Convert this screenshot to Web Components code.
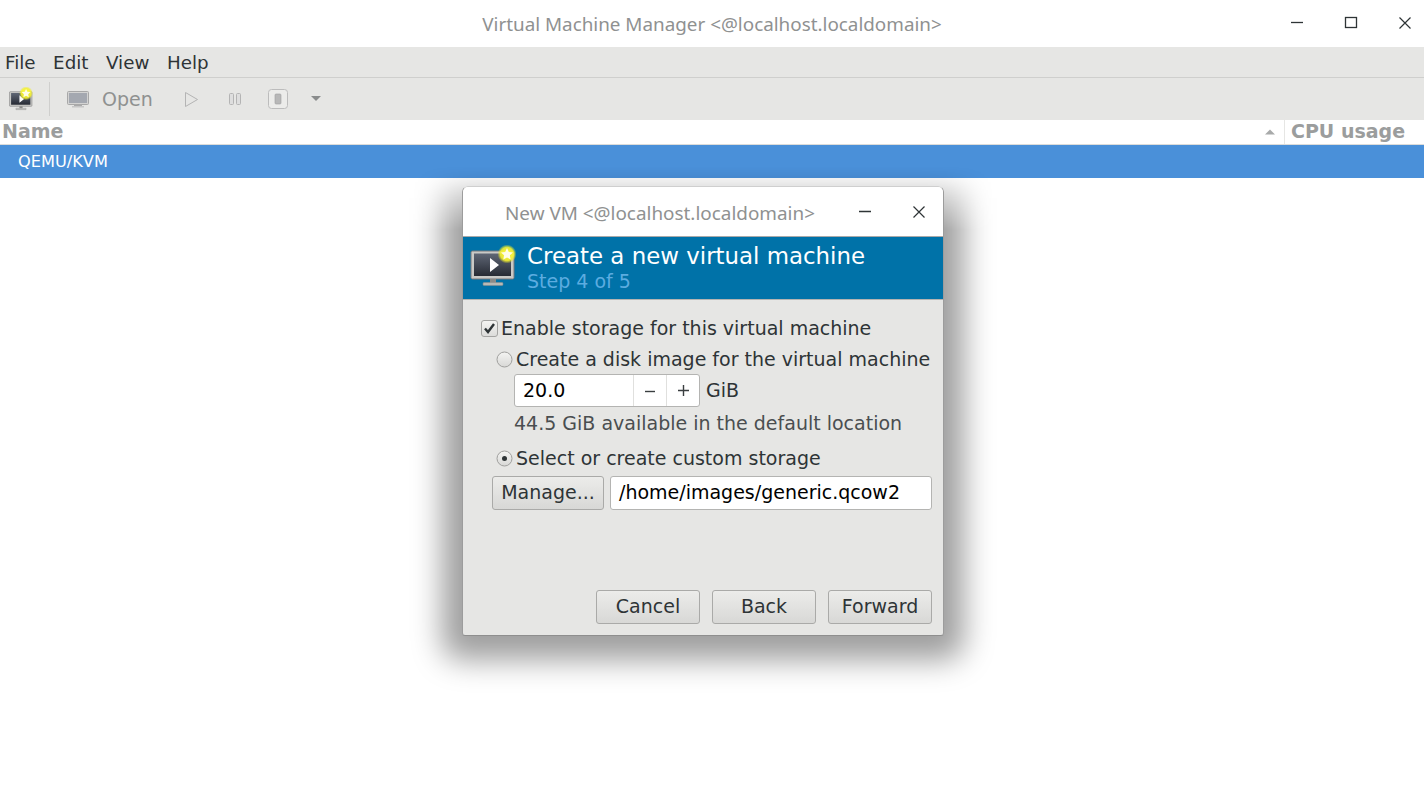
<!DOCTYPE html>
<html><head><meta charset="utf-8"><style>
html,body{margin:0;padding:0;width:1424px;height:802px;overflow:hidden;background:#fff;font-family:"DejaVu Sans",sans-serif}
</style></head><body>
<vm-manager></vm-manager>
<script>
function def(name,css,html){customElements.define(name,class extends HTMLElement{constructor(){super();this.attachShadow({mode:'open'}).innerHTML='<style>'+css+'</style>'+html;}});}
const monitor=(cx,cy,s,w,h)=>`<svg width="${w}" height="${h}" viewBox="0 0 46 44"><defs><linearGradient id="sc" x1="0" y1="0" x2="0" y2="1"><stop offset="0" stop-color="#5f6675"/><stop offset="1" stop-color="#272b34"/></linearGradient><radialGradient id="gl"><stop offset="0" stop-color="#ffff40"/><stop offset=".7" stop-color="#f6f230" stop-opacity=".9"/><stop offset="1" stop-color="#e8e820" stop-opacity="0"/></radialGradient></defs><rect x="1" y="8" width="43" height="28" rx="1.500" fill="#c9c9c6" stroke="#77777a"/><rect x="4" y="10.500" width="37" height="22.500" fill="url(#sc)"/><path d="M20 15v14l9-7z" fill="#fff"/><rect x="20" y="36" width="6" height="4" fill="#8a8a88"/><rect x="13" y="39.500" width="20" height="3" rx="1" fill="#b8b8b5" stroke="#8a8a88" stroke-width=".5"/><g transform="translate(${cx} ${cy}) scale(${s})"><circle r="9.500" fill="url(#gl)"/><path d="M0-6l1.800 3.900 4.200.5-3.100 2.900.8 4.200-3.700-2.100-3.700 2.100.8-4.200-3.100-2.900 4.200-.5z" fill="#fffde8"/></g></svg>`;
def('title-bar',`:host{display:flex;align-items:center;justify-content:center;height:47px;background:#fff;position:relative;font:18.850px "Noto Sans",sans-serif;color:#8f9191}
.c{position:absolute;right:12px;top:0;height:45px;display:flex;gap:40px;align-items:center}svg{display:block}`,`<span>Virtual Machine Manager &lt;@localhost.localdomain&gt;</span>
<div class="c"><svg width="14" height="14"><path d="M1 6.500h12" stroke="#2e3436" stroke-width="1.300"/></svg><svg width="14" height="14"><rect x="1.500" y="1.500" width="11" height="10" fill="none" stroke="#2e3436" stroke-width="1.300"/></svg><svg width="14" height="14"><path d="M1.500 1.500l11 11M12.500 1.500l-11 11" stroke="#2e3436" stroke-width="1.200"/></svg></div>`);
def('menu-bar',`:host{display:flex;height:30px;background:#e6e6e4;border-bottom:1px solid #cfcfcd;align-items:center;padding-left:5px;gap:17.500px;font-size:18.300px;color:#2e3436}`,`<span>File</span><span>Edit</span><span>View</span><span>Help</span>`);
def('tool-bar',`:host{display:flex;height:42px;background:#e6e6e4;align-items:center;font-size:19px;color:#8f9190}
svg{display:block}.m{margin-left:9px}.sep{width:1px;height:34px;background:#cfcfcd;margin:0 17px 0 16px}.open{margin:0 31px 0 13px}`,
`<span class="m">${monitor(32.700,11,1.400,24,24)}</span><div class="sep"></div>
<svg width="22" height="20" viewBox="0 0 22 20"><rect x=".5" y="2.500" width="21" height="13" rx="1" fill="#d3d3d2" stroke="#a8a8a8"/><rect x="2" y="4" width="18" height="10" fill="#a4a8b0"/><rect x="7" y="15.500" width="8" height="1.500" fill="#aaa"/><rect x="5" y="17" width="12" height="1.500" fill="#c6c6c6"/></svg>
<span class="open">Open</span>
<svg width="15" height="17" viewBox="0 0 15 17"><path d="M1.500 1.500v14l12-7z" fill="#e6e6e4" stroke="#b4b4b4"/></svg>
<svg style="margin-left:29px" width="14" height="14" viewBox="0 0 14 14"><rect x="1.500" y="1.500" width="4" height="11" rx="1" fill="#dedede" stroke="#b4b4b4"/><rect x="8.500" y="1.500" width="4" height="11" rx="1" fill="#dedede" stroke="#b4b4b4"/></svg>
<svg style="margin-left:26px" width="20" height="20" viewBox="0 0 20 20"><rect x=".5" y=".5" width="19" height="19" rx="3" fill="#ececea" stroke="#bcbcbc"/><rect x="7" y="5" width="6" height="10" rx="1" fill="#b8b8b8" stroke="#a0a0a0" stroke-width=".6"/></svg>
<svg style="margin-left:23px" width="10" height="6"><path d="M0 0h10l-5 5z" fill="#8a8c8c"/></svg>`);
def('list-header',`:host{display:flex;height:24px;background:#fff;border-bottom:1px solid #dcdcda;font-size:19px;font-weight:700;color:#9b9d9d;align-items:center;line-height:22px}
.n{flex:1;padding-left:2px;position:relative;height:24px}.s{width:140px;height:24px;border-left:1px solid #e6e6e4;padding-left:6px;box-sizing:border-box}
svg{position:absolute;right:9px;top:9px}`,`<div class="n">Name<svg width="10" height="6"><path d="M0 5.500h10l-5-5z" fill="#a8aaaa"/></svg></div><div class="s">CPU usage</div>`);
def('list-row',`:host{display:flex;height:33px;background:#4a90d9;color:#fff;align-items:center;padding-left:18px;font-size:16.200px}`,`<slot></slot>`);
def('gtk-button',`:host{display:inline-flex;align-items:center;justify-content:center;box-sizing:border-box;height:34px;padding-bottom:2px;border:1px solid #aaaaa8;border-radius:3px;background:linear-gradient(#ececea,#d8d8d6);color:#2e3436;font-size:19px}`,`<slot></slot>`);
def('gtk-entry',`:host{display:flex;align-items:center;box-sizing:border-box;height:34px;padding:0 0 2px 8px;border:1px solid #b4b4b2;border-radius:3px;background:#fff;color:#000;font-size:19px}`,`<slot></slot>`);
def('gtk-check',`:host{display:flex;align-items:center;gap:3px;height:24px;font-size:19px;color:#2e3436}
.b{width:15px;height:15px;border:1px solid #a4a4a2;border-radius:3px;background:linear-gradient(#f4f4f2,#dcdcda);display:flex}`,`<span class="b"><svg width="15" height="15"><path d="M3 7.500l3 3.500 6-8" fill="none" stroke="#2e3436" stroke-width="2.400"/></svg></span><slot></slot>`);
def('gtk-radio',`:host{display:flex;align-items:center;gap:3px;height:24px;font-size:19px;color:#2e3436}
svg{display:block}`,`<svg width="17" height="17"><defs><linearGradient id="r" x1="0" y1="0" x2="0" y2="1"><stop offset="0" stop-color="#f4f4f2"/><stop offset="1" stop-color="#d8d8d6"/></linearGradient></defs><circle cx="8.500" cy="8.500" r="7.500" fill="url(#r)" stroke="#a0a09e"/><circle class="d" cx="8.500" cy="8.500" r="2.500" fill="#2e3436" style="display:var(--dot,none)"/></svg><slot></slot>`);
def('spin-field',`:host{display:flex;align-items:center;gap:6px;font-size:19px;color:#2e3436}
.f{display:flex;width:186px;height:33px;box-sizing:border-box;border:1px solid #b4b4b2;border-radius:3px;background:#fff;align-items:center}
.v{flex:1;padding:0 0 2px 8px;color:#000}.g{padding-bottom:2px}.b{box-sizing:border-box;width:33px;height:31px;border-left:1px solid #e0e0de;display:flex;align-items:center;justify-content:center}`,
`<div class="f"><span class="v">20.0</span><span class="b"><svg width="10" height="10"><path d="M0 5.500h10" stroke="#3a3e40" stroke-width="1.400"/></svg></span><span class="b"><svg width="11" height="11"><path d="M0 5.500h11M5.500 0v11" stroke="#3a3e40" stroke-width="1.400"/></svg></span></div><span class="g">GiB</span>`);
def('dialog-head',`:host{display:flex;height:62px;background:#0072a8;border-top:1px solid #a9a9a9;border-bottom:1px solid #b4b4b2;color:#fff;align-items:center;padding-left:7px;gap:11px}
.t{font-size:22.900px;line-height:26px}.s{font-size:19px;color:#5cace0;line-height:24px;margin-top:0}svg{display:block;margin-top:-6px}`,monitor(37,11,1,46,44)+`<div><div class="t">Create a new virtual machine</div><div class="s">Step 4 of 5</div></div>`);
def('dialog-title',`:host{display:flex;height:49px;background:#fff;align-items:center;font:18.900px "Noto Sans",sans-serif;color:#8f9191;padding:2px 0 0 42px;box-sizing:border-box;position:relative}
.c{position:absolute;right:17px;top:0;height:49px;display:flex;gap:40px;align-items:center}svg{display:block}`,`<span>New VM &lt;@localhost.localdomain&gt;</span><div class="c"><svg width="14" height="14"><path d="M1 6.500h12" stroke="#2e3436" stroke-width="1.300"/></svg><svg width="14" height="14"><path d="M1.500 1.500l11 11M12.500 1.500l-11 11" stroke="#2e3436" stroke-width="1.200"/></svg></div>`);
def('window-shadow',`:host{position:absolute;left:382px;top:166px;width:642px;height:560px;-webkit-mask-image:linear-gradient(transparent 0,#000 64px);mask-image:linear-gradient(transparent 0,#000 64px)}
.s{position:absolute;left:80px;top:20px;width:482px;height:450px;border-radius:6px;box-shadow:0 4px 30px 20px rgba(0,0,0,.38)}`,`<div class="s"></div>`);
def('new-vm-dialog',`:host{position:absolute;left:462px;top:186px;width:482px;height:450px;box-sizing:border-box;display:flex;flex-direction:column;background:#e6e6e4;border-radius:6px 6px 3px 3px;border:1px solid;border-color:#cfcfcf #9c9c9c #8e8e8e #9c9c9c;overflow:hidden}
.body{flex:1;display:flex;flex-direction:column;padding:16px 11px 11px 18px;font-size:19px}
.in{padding-left:15px}.in2{padding-left:33px}
.info{color:#4a4e50;margin-top:3px;height:26px;line-height:26px;padding-left:33px}
.row{display:flex;gap:6px;padding-left:11px;margin-top:6px}
.foot{margin-top:auto;display:flex;justify-content:flex-end;gap:12px}
gtk-button.b{width:104px}`,`<dialog-title></dialog-title><dialog-head></dialog-head>
<div class="body"><gtk-check>Enable storage for this virtual machine</gtk-check>
<gtk-radio class="in" style="margin-top:7px">Create a disk image for the virtual machine</gtk-radio>
<spin-field class="in2" style="margin-top:3px"></spin-field>
<div class="info">44.5 GiB available in the default location</div>
<gtk-radio class="in" style="margin-top:10px;--dot:block">Select or create custom storage</gtk-radio>
<div class="row"><gtk-button style="width:112px">Manage...</gtk-button><gtk-entry style="flex:1">/home/images/generic.qcow2</gtk-entry></div>
<div class="foot"><gtk-button class="b">Cancel</gtk-button><gtk-button class="b">Back</gtk-button><gtk-button class="b">Forward</gtk-button></div></div>`);
def('vm-manager',`:host{display:block;width:1424px;height:802px;position:relative;background:#fff}`,`<title-bar></title-bar><menu-bar></menu-bar><tool-bar></tool-bar><list-header></list-header><list-row>QEMU/KVM</list-row><window-shadow></window-shadow><new-vm-dialog></new-vm-dialog>`);
</script></body></html>
